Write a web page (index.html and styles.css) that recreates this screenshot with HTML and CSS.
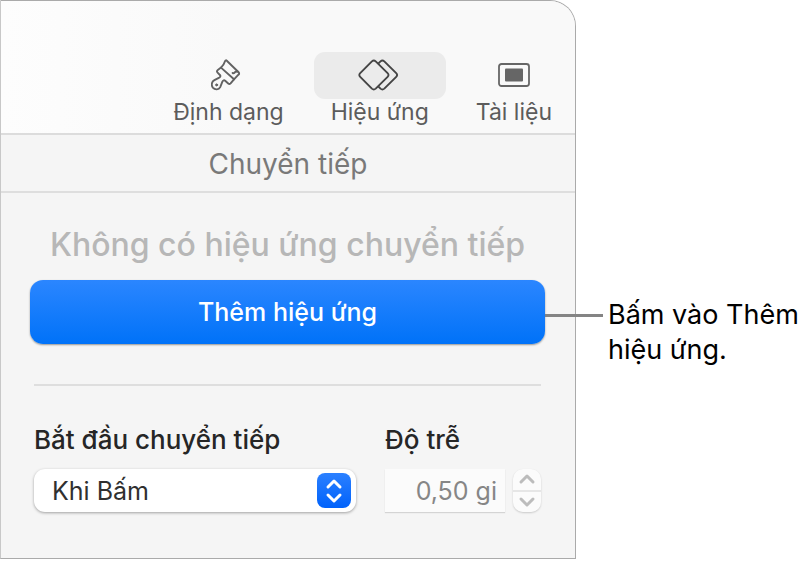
FILE: index.html
```html
<!DOCTYPE html>
<html lang="vi">
<head>
<meta charset="utf-8">
<meta name="viewport" content="width=device-width, initial-scale=1">
<title>Chuyển tiếp</title>
<link rel="stylesheet" href="styles.css">
</head>
<body>
<div class="page">
  <main class="panel">
    <nav class="toolbar">
      <button class="tool" type="button">
        <span class="tool-icon">
          <svg width="34" height="36" viewBox="0 0 34 36" fill="none" stroke="#626262" stroke-width="1.9" stroke-linejoin="round" stroke-linecap="round">
            <path d="M15.8 2.7 L27.6 14.3 C28.6 15.3 28.2 16.3 27.2 16.9 L23 21.3 L10 9.6 C12.4 7.5 13.4 5.3 14 3.3 C14.4 2.1 15.2 2.1 15.8 2.7Z"/>
            <path d="M21.6 14.9 C22.6 15.7 23.6 14.9 24.6 13.7 L26.6 13.5"/>
            <path d="M10 9.6 L6.8 11.9 C5.7 12.7 5.7 13.8 6.6 14.7 L8.9 17 C9.9 18.1 9.2 19.2 7.8 19.8 L3.4 22.1 C.6 23.5 0 27.3 1.8 29.6 C4.1 32.2 7.8 31.9 9.2 29.1 L11.4 23.7 C12 22.3 13.2 21.9 14.2 22.8 L17.2 25.5 C18 26.2 18.9 26.1 19.6 25.4 L23 21.3"/>
            <circle cx="5.6" cy="26.9" r="1" fill="#626262" stroke-width="1"/>
          </svg>
        </span>
        <span class="tool-label">Định dạng</span>
      </button>
      <button class="tool" type="button" aria-pressed="true">
        <span class="tool-icon tool-icon-active">
          <svg width="44" height="36" viewBox="0 0 44 36" fill="none" stroke="#444" stroke-width="1.9" stroke-linejoin="round">
            <path d="M13.9 3.4 Q15.8 1.7 17.7 3.4 L29.6 15.2 Q31.4 17 29.6 18.8 L17.7 30.6 Q15.8 32.3 13.9 30.6 L2.2 18.8 Q.4 17 2.2 15.2Z"/>
            <path d="M20.2 5.7 L22.5 3.4 Q24.4 1.7 26.3 3.4 L38.2 15.2 Q40 17 38.2 18.8 L26.3 30.6 Q24.4 32.3 22.5 30.6 L20.2 28.3"/>
          </svg>
        </span>
        <span class="tool-label">Hiệu ứng</span>
      </button>
      <button class="tool" type="button">
        <span class="tool-icon">
          <svg width="32" height="25" viewBox="0 0 32 25">
            <rect x="1" y="1" width="30" height="22" rx="2.5" fill="none" stroke="#666" stroke-width="1.8"/>
            <rect x="7" y="5.5" width="18" height="13" rx="1" fill="#666"/>
          </svg>
        </span>
        <span class="tool-label">Tài liệu</span>
      </button>
    </nav>
    <h1 class="title">Chuyển tiếp</h1>
    <section class="content">
      <h2 class="status">Không có hiệu ứng chuyển tiếp</h2>
      <div class="action">
        <button class="add" type="button">Thêm hiệu ứng</button>
        <span class="leader"></span>
      </div>
      <hr class="rule">
      <form class="options">
        <div class="field field-start">
          <label class="label" for="start">Bắt đầu chuyển tiếp</label>
          <div class="popup">
            <select class="select" id="start"><option>Khi Bấm</option></select>
            <span class="badge">
              <svg width="18" height="26" viewBox="0 0 18 26" fill="none" stroke="#fff" stroke-width="3" stroke-linecap="round" stroke-linejoin="round">
                <path d="M3 9 L9 3 L15 9"/><path d="M3 17 L9 23 L15 17"/>
              </svg>
            </span>
          </div>
        </div>
        <div class="field">
          <label class="label" for="delay">Độ trễ</label>
          <div class="delay">
            <input class="input" id="delay" type="text" value="0,50 gi" disabled>
            <div class="stepper">
              <button class="step" type="button" aria-label="Tăng" disabled>
                <svg width="18" height="12" viewBox="0 0 18 12" fill="none" stroke="#bcbcbc" stroke-width="3" stroke-linecap="round" stroke-linejoin="round"><path d="M3 9 L9 3 L15 9"/></svg>
              </button>
              <button class="step" type="button" aria-label="Giảm" disabled>
                <svg width="18" height="12" viewBox="0 0 18 12" fill="none" stroke="#bcbcbc" stroke-width="3" stroke-linecap="round" stroke-linejoin="round"><path d="M3 3 L9 9 L15 3"/></svg>
              </button>
            </div>
          </div>
        </div>
      </form>
    </section>
  </main>
  <aside class="callout">Bấm vào Thêm hiệu ứng.</aside>
</div>
</body>
</html>
```
FILE: styles.css
```css
* {
  box-sizing: border-box;
}

body {
  margin: 0;
  background: #fff;
  font-family: Inter, "Noto Sans", sans-serif;
  color: #262626;
}

button,
select,
input {
  font-family: inherit;
  border: 0;
  margin: 0;
}

.page {
  display: flex;
}

.panel {
  flex: 1;
  min-width: 0;
  background: #f5f5f5;
  border: 1px solid #aaa;
  border-left-color: #c8c8c8;
  border-top-right-radius: 26px;
}

.toolbar {
  display: flex;
  justify-content: flex-end;
  gap: 30px;
  padding: 51px 23px 8px;
  background: linear-gradient(90deg, #fdfdfd, #f9f9f9 40%);
  border-bottom: 2px solid #dcdcdc;
  border-top-right-radius: 25px;
}

.tool {
  display: flex;
  flex-direction: column;
  align-items: center;
  padding: 0;
  background: none;
  color: #5c5c5c;
}

.tool-icon {
  display: flex;
  align-items: center;
  justify-content: center;
  height: 47px;
}

.tool-icon-active {
  width: 132px;
  border-radius: 11px;
  background: #ebebeb;
}

.tool-label {
  font-size: 23px;
  line-height: 26px;
}

.title {
  margin: 0;
  padding: 12px 0 10px;
  border-bottom: 2px solid #dedede;
  color: #797979;
  font-size: 28px;
  font-weight: 400;
  line-height: 34px;
  text-align: center;
}

.content {
  padding: 32px 30px 46px 29px;
}

.status {
  margin: 0 0 15px;
  color: #b7b7b7;
  font-size: 32px;
  font-weight: 500;
  line-height: 40px;
  text-align: center;
  white-space: nowrap;
}

.action {
  position: relative;
}

.add {
  display: block;
  width: 100%;
  height: 64px;
  border-radius: 13px;
  background: linear-gradient(#2b86ff, #0072f8);
  box-shadow: 0 1px 2px rgba(0, 0, 0, 0.4);
  color: #fff;
  font-size: 25px;
  font-weight: 500;
}

.leader {
  position: absolute;
  left: 100%;
  top: 34px;
  width: 58px;
  height: 3px;
  background: #848484;
}

.rule {
  height: 2px;
  margin: 40px 4px 37px;
  border: 0;
  background: #dedede;
}

.options {
  display: flex;
  gap: 29px;
  padding: 0 4px;
}

.field-start {
  flex: 1;
}

.label {
  display: block;
  margin-bottom: 13px;
  font-size: 26px;
  font-weight: 500;
  line-height: 33px;
}

.popup {
  position: relative;
}

.select {
  display: block;
  width: 100%;
  height: 43px;
  padding: 0 18px;
  border-radius: 11px;
  appearance: none;
  background: #fff;
  box-shadow: 0 1px 3px rgba(0, 0, 0, 0.35);
  color: #303030;
  font-size: 25px;
}

.badge {
  position: absolute;
  top: 4px;
  right: 5px;
  display: flex;
  align-items: center;
  justify-content: center;
  width: 34px;
  height: 35px;
  border-radius: 8px;
  background: linear-gradient(#2b80ff, #0062fb);
  pointer-events: none;
}

.delay {
  display: flex;
  gap: 8px;
}

.input {
  width: 120px;
  height: 43px;
  padding: 0 8px;
  border-radius: 0;
  background: #fbfbfb;
  box-shadow: 0 1px 1px #d4d4d4;
  color: #868686;
  font-size: 25px;
  text-align: right;
}

.stepper {
  display: flex;
  flex-direction: column;
  gap: 2px;
  width: 28px;
  height: 43px;
  border-radius: 10px;
  overflow: hidden;
  background: #e6e6e6;
  box-shadow: 0 1px 2px rgba(0, 0, 0, 0.18);
}

.step {
  display: flex;
  flex: 1;
  align-items: center;
  justify-content: center;
  padding: 0;
  background: #fbfbfb;
}

.callout {
  width: 233px;
  padding: 297px 0 0 32px;
  color: #000;
  font-size: 27px;
  line-height: 35px;
}
```
